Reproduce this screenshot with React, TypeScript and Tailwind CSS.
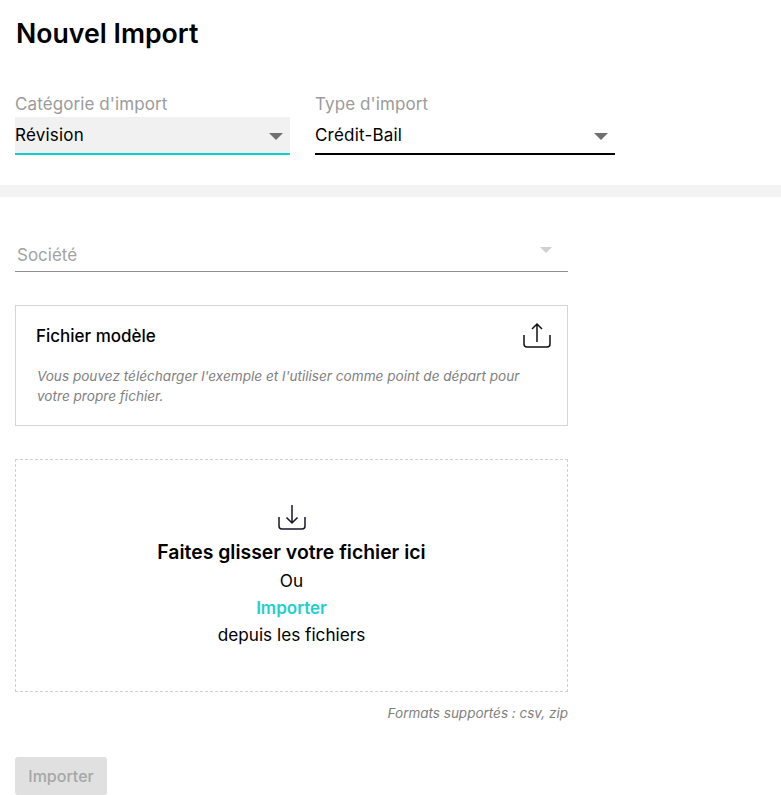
function Select({ label, value, width, filled }: { label: string; value: string; width: string; filled?: boolean }) {
  return (
    <div className={width}>
      <div className="h-[23px] text-[17px] leading-[21px] tracking-[0.1px] text-[#9b9b9b]">{label}</div>
      <div className={`relative flex h-[38px] items-center pt-[2px] text-[17px] tracking-[0.2px] text-black ${filled ? 'bg-[#f1f1f1] border-b-[2px] border-[#0fd0d0]' : 'border-b-[2px] border-black'}`}>
        <span>{value}</span>
        <span className="absolute right-[7px] top-[16px] h-0 w-0 border-x-[7px] border-t-[7px] border-x-transparent border-t-[#707070]" />
      </div>
    </div>
  );
}
export default function App() {
  return (
    <div className="w-[781px] h-[795px] overflow-hidden bg-white font-['Inter',sans-serif]">
      <div className="h-[185px] pl-[15px] pt-[16px]">
        <h1 className="pl-[1px] text-[26.700px] leading-[34px] font-semibold text-black">Nouvel Import</h1>
        <div className="mt-[44px] flex gap-[25px]">
          <Select label="Catégorie d'import" value="Révision" width="w-[275px]" filled />
          <Select label="Type d'import" value="Crédit-Bail" width="w-[300px]" />
        </div>
      </div>
      <div className="h-[12px] bg-[#f3f3f3]" />
      <div className="w-[553px] ml-[15px]">
        <div className="relative mt-[39px] flex h-[36px] items-end border-b border-[#8f8f8f] pb-[3px] pl-[2px] text-[17px] text-[#a3a3a3]">
          Société
          <span className="absolute right-[16px] top-[11px] h-0 w-0 border-x-[6px] border-t-[6px] border-x-transparent border-t-[#d0d0d0]" />
        </div>
        <div className="relative mt-[33px] h-[121px] border border-[#d5d5d5] px-[21px] pt-[20px]">
          <div className="ml-[-1px] text-[17px] leading-[20px] font-medium text-black">Fichier modèle</div>
          <p className="mt-[20px] text-[13.600px] leading-[20px] italic text-[#808080]">Vous pouvez télécharger l'exemple et l'utiliser comme point de départ pour votre propre fichier.</p>
          <svg className="absolute left-[506px] top-[16px]" width="30" height="27" viewBox="0 0 30 27" fill="none" stroke="#111" strokeWidth="1.5"><path d="M15 20V2M10 7l5-5 5 5M2 13v9a3 3 0 0 0 3 3h20a3 3 0 0 0 3-3v-9" /></svg>
        </div>
        <div className="mt-[33px] flex h-[233px] flex-col items-center border border-dashed border-[#d0d0d0] pt-[44px] text-[17.200px] text-black">
          <svg width="30" height="27" viewBox="0 0 30 27" fill="none" stroke="#14142b" strokeWidth="1.5"><path d="M15 1v18M9.500 13.500 15 19l5.500-5.500M2 13v9a3 3 0 0 0 3 3h20a3 3 0 0 0 3-3v-9" /></svg>
          <div className="mt-[8px] text-[19.400px] leading-[26px] font-semibold">Faites glisser votre fichier ici</div>
          <div className="leading-[27px] mt-[2px]">Ou</div>
          <div className="mt-[1px] leading-[27px] text-[17px] font-semibold text-[#1fd0d0]">Importer</div>
          <div className="leading-[25px]">depuis les fichiers</div>
        </div>
        <div className="mt-[11px] text-right text-[13.500px] leading-[20px] italic text-[#808080]">Formats supportés : csv, zip</div>
        <button className="mt-[34px] h-[38px] w-[92px] rounded-[3px] bg-[#e0e0e0] text-[16px] font-medium text-[#a6a6a6]">Importer</button>
      </div>
    </div>
  );
}
